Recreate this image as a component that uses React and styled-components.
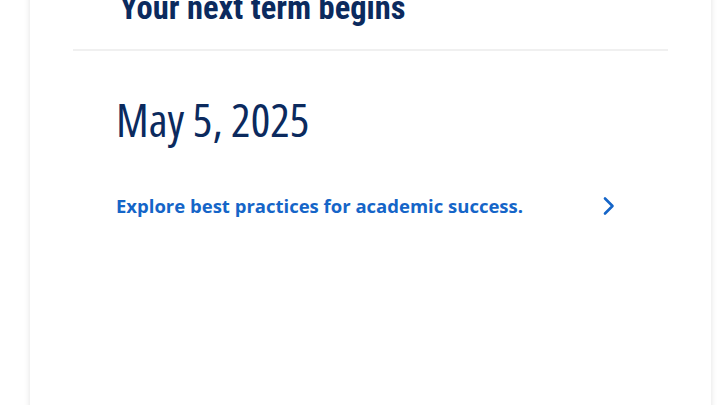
import styled, { createGlobalStyle } from 'styled-components'

const GlobalStyle = createGlobalStyle`
  html, body {
    margin: 0;
    padding: 0;
    background: #ffffff;
    overflow: hidden;
  }
`

const Page = styled.div`
  width: 720px;
  height: 405px;
  overflow: hidden;
  background: #ffffff;
`

const Card = styled.section`
  margin: -12px 9px 0 30px;
  height: 460px;
  background: #ffffff;
  box-shadow: 0 0 6px rgba(0, 0, 0, 0.12);
`

const CardHeader = styled.header`
  margin: 0 43px;
  padding: 0 0 21px 47px;
  border-bottom: 2px solid #f0f0f0;
`

const Heading = styled.h2`
  margin: 0;
  font-family: 'Roboto Condensed', 'DejaVu Sans Condensed', sans-serif;
  font-weight: 700;
  font-size: 32.5px;
  line-height: 40px;
  color: #0b2a5e;
`

const CardBody = styled.div`
  padding: 43px 94px 0 86px;
  display: flex;
  flex-direction: column;
  gap: 49px;
`

const TermDate = styled.p`
  margin: 0;
  font-family: 'Open Sans', 'Roboto Condensed', sans-serif;
  font-stretch: 75%;
  font-weight: 500;
  font-size: 46px;
  line-height: 50px;
  letter-spacing: 0;
  color: #0b2a5e;
`

const LinkRow = styled.a`
  display: flex;
  align-items: center;
  justify-content: space-between;
  text-decoration: none;
  font-family: 'Open Sans', 'Liberation Sans', sans-serif;
  font-weight: 700;
  font-size: 18.5px;
  line-height: 26px;
  color: #1565c8;
  cursor: pointer;
`

function Chevron() {
  return (
    <svg width="16" height="22" viewBox="0 0 16 22" fill="none">
      <path d="M4 3.5l7.5 7.5-7.5 7.5" stroke="#1565c8" strokeWidth="2.6" strokeLinecap="round" strokeLinejoin="round" />
    </svg>
  )
}

export default function App() {
  return (
    <Page>
      <GlobalStyle />
      <Card>
        <CardHeader>
          <Heading>Your next term begins</Heading>
        </CardHeader>
        <CardBody>
          <TermDate>May 5, 2025</TermDate>
          <LinkRow href="#">
            <span>Explore best practices for academic success.</span>
            <Chevron />
          </LinkRow>
        </CardBody>
      </Card>
    </Page>
  )
}
